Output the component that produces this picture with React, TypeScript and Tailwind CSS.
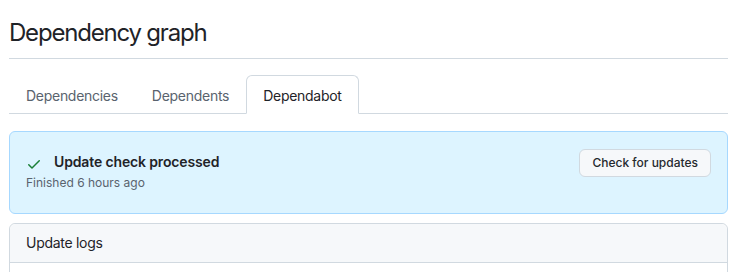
import React from 'react';

const font = { fontFamily: 'Inter, "Noto Sans", sans-serif' };

function CheckIcon() {
  return (
    <svg viewBox="0 0 16 16" width="16" height="16" className="fill-[#1a7f37] shrink-0 mt-[4px] mr-3">
      <path d="M13.78 4.22a.75.75 0 0 1 0 1.06l-7.25 7.25a.75.75 0 0 1-1.06 0L2.22 9.28a.751.751 0 0 1 .018-1.042.751.751 0 0 1 1.042-.018L6 10.94l6.72-6.72a.75.75 0 0 1 1.06 0Z" />
    </svg>
  );
}

export default function App() {
  const tabs = ['Dependencies', 'Dependents', 'Dependabot'];
  const active = 'Dependabot';

  return (
    <div className="min-h-screen bg-white text-[#1f2328] pl-[9px] pr-[19px] overflow-hidden" style={font}>
      {/* Subhead */}
      <div className="pt-[15px] pb-[7px] border-b border-[#d1d9e0]">
        <h2 className="text-[24px] leading-[36px] font-normal tracking-[-0.05em]">Dependency graph</h2>
      </div>

      {/* Tabs */}
      <nav className="mt-4 flex border-b border-[#d1d9e0]">
        {tabs.map((t) =>
          t === active ? (
            <a
              key={t}
              href="#"
              className="-mb-px px-4 pt-[10px] pb-[7px] text-[14px] leading-[20px] tracking-[-0.02em] text-[#1f2328] bg-white border border-[#d1d9e0] border-b-white rounded-t-[6px]"
            >
              {t}
            </a>
          ) : (
            <a
              key={t}
              href="#"
              className="-mb-px px-4 pt-[10px] pb-[7px] text-[14px] leading-[20px] tracking-[-0.02em] text-[#59636e] border border-transparent"
            >
              {t}
            </a>
          )
        )}
      </nav>

      {/* Flash */}
      <div className="mt-[17px] flex items-start justify-between px-4 pt-5 pb-[21px] bg-[#ddf4ff] border border-[#a6d8ff] rounded-[6px]">
        <div>
          <div className="flex items-start">
            <CheckIcon />
            <span className="text-[14px] leading-[20px] font-semibold tracking-[-0.01em]">Update check processed</span>
          </div>
          <div className="mt-[2px] text-[12px] leading-[18px] text-[#59636e]">Finished 6 hours ago</div>
        </div>
        <button className="-mt-[3px] h-[28px] px-3 text-[12px] font-medium text-[#25292e] bg-[#f6f8fa] border border-[#d1d9e0] rounded-[6px]">
          Check for updates
        </button>
      </div>

      {/* Update logs */}
      <div className="mt-[9px] border border-[#d1d9e0] rounded-t-[6px]">
        <div className="px-4 pt-[9px] pb-[9px] bg-[#f6f8fa] border-b border-[#d1d9e0] rounded-t-[6px] text-[14px] leading-[20px] tracking-[-0.02em]">
          Update logs
        </div>
        <div className="h-[60px] bg-white" />
      </div>
    </div>
  );
}
